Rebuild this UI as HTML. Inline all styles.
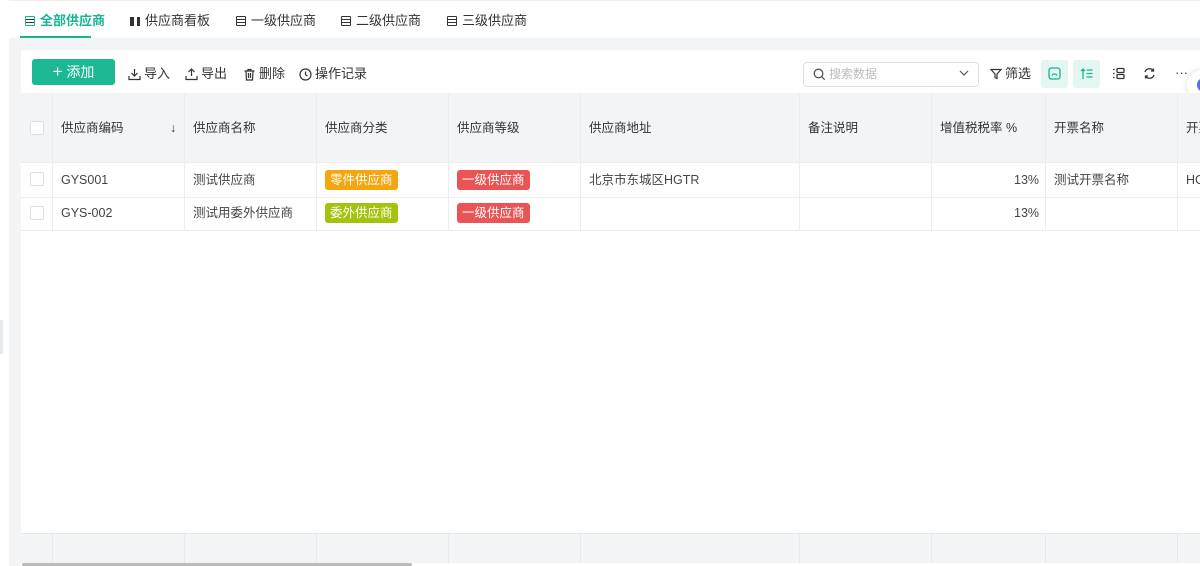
<!DOCTYPE html>
<html><head><meta charset="utf-8"><style>
*{box-sizing:border-box;margin:0;padding:0}
body{width:1200px;height:566px;overflow:hidden;background:#fff;font-family:"Liberation Sans","Noto Sans CJK SC",sans-serif;font-size:13px;color:#333;position:relative}
.abs{position:absolute}
.gray{background:#f3f4f6}
.tab{position:absolute;top:12px;height:18px;line-height:18px;font-size:13px;color:#333;display:flex;align-items:center;gap:5px;white-space:nowrap}
.ti{width:10px;height:10px;border:1.5px solid #333;border-radius:1px;position:relative}
.ti:after{content:"";position:absolute;left:0;right:0;top:2px;height:2px;border-top:1px solid #333;border-bottom:1px solid #333}
.tb{position:absolute;top:65px;height:18px;line-height:18px;font-size:13px;color:#333;display:flex;align-items:center;gap:3px;white-space:nowrap}
.col{position:absolute;top:93px;height:137px;border-left:1px solid #ebedf0}
.fcol{position:absolute;top:533px;height:30px;border-left:1px solid #e6e8eb}
.h{position:absolute;top:119px;height:18px;line-height:18px;font-size:12.5px;color:#333;white-space:nowrap}
.c{position:absolute;height:18px;line-height:18px;font-size:12.5px;color:#444;white-space:nowrap}
.tag{position:absolute;color:#fff;font-size:12.5px;padding:0 5px;height:20px;line-height:20px;border-radius:3px;white-space:nowrap}
.cb{position:absolute;left:30px;width:14px;height:14px;border:1px solid #dcdfe6;border-radius:2px;background:#fff}
</style></head><body>
<div class="abs gray" style="left:9px;top:38px;width:1191px;height:528px"></div>
<div class="abs" style="left:9px;top:0;width:1191px;height:38px;background:#fff;border-top:1px solid #eee"></div>
<div class="abs" style="left:0;top:320px;width:3px;height:34px;background:#e9eaec"></div>
<div class="tab" style="left:25px;color:#19b394;font-weight:bold"><span class="ti" style="border-color:#19b394"></span>全部供应商</div>
<div class="abs" style="left:20px;top:36px;width:71px;height:2px;background:#19b394"></div>
<div class="tab" style="left:130px"><span style="display:inline-block;width:10px;height:9px;border-left:4px solid #333;border-right:3px solid #333"></span>供应商看板</div>
<div class="tab" style="left:236px"><span class="ti"></span>一级供应商</div>
<div class="tab" style="left:341px"><span class="ti"></span>二级供应商</div>
<div class="tab" style="left:447px"><span class="ti"></span>三级供应商</div>

<div class="abs" style="left:21px;top:50px;width:1179px;height:516px;background:#fff"></div>
<div class="abs" style="left:32px;top:59px;width:83px;height:26px;background:#1cb894;border-radius:3px;color:#fff;font-size:14px;text-align:center;line-height:26px"><b style="font-size:17px;font-weight:normal">+</b> 添加</div>
<div class="tb" style="left:128px"><svg width="13" height="13" viewBox="0 0 13 13" fill="none" stroke="#333" stroke-width="1.2"><path d="M6.5 1v7M3.5 5l3 3 3-3M1 8v3.5h11V8"/></svg>导入</div>
<div class="tb" style="left:185px"><svg width="13" height="13" viewBox="0 0 13 13" fill="none" stroke="#333" stroke-width="1.2"><path d="M6.5 8V1M3.5 4l3-3 3 3M1 8v3.5h11V8"/></svg>导出</div>
<div class="tb" style="left:243px"><svg width="13" height="13" viewBox="0 0 13 13" fill="none" stroke="#333" stroke-width="1.2"><path d="M1.5 3h10M5 3V1.5h3V3M3 3l.5 9h6l.5-9M5.5 5v5M7.5 5v5"/></svg>删除</div>
<div class="tb" style="left:299px"><svg width="13" height="13" viewBox="0 0 13 13" fill="none" stroke="#333" stroke-width="1.2"><circle cx="6.5" cy="6.5" r="5.5"/><path d="M6.5 3.5v3.2l2 1.3"/></svg>操作记录</div>

<div class="abs" style="left:803px;top:62px;width:176px;height:25px;border:1px solid #dcdfe6;border-radius:4px"></div>
<svg class="abs" style="left:813px;top:68px" width="13" height="13" viewBox="0 0 13 13" fill="none" stroke="#555" stroke-width="1.3"><circle cx="5.5" cy="5.5" r="4.3"/><path d="M8.7 8.7l3 3"/></svg>
<div class="abs" style="left:829px;top:65px;height:18px;line-height:18px;font-size:12px;color:#bbb">搜索数据</div>
<svg class="abs" style="left:959px;top:70px" width="10" height="7" viewBox="0 0 10 7" fill="none" stroke="#555" stroke-width="1.2"><path d="M1 1l4 4 4-4"/></svg>
<div class="tb" style="left:990px"><svg width="12" height="12" viewBox="0 0 12 12" fill="none" stroke="#333" stroke-width="1.2"><path d="M1 1.5h10L7 6v4.5L5 9.5V6z"/></svg>筛选</div>
<div class="abs" style="left:1041px;top:60px;width:27px;height:28px;background:#e3f6f1;border-radius:3px"></div>
<svg class="abs" style="left:1048px;top:67px" width="13" height="13" viewBox="0 0 13 13" fill="none" stroke="#19b394" stroke-width="1.3"><rect x="1" y="1" width="11" height="11" rx="2.5"/><path d="M4 8.5c1-2 4-2 5 0"/></svg>
<div class="abs" style="left:1073px;top:60px;width:27px;height:28px;background:#e3f6f1;border-radius:3px"></div>
<svg class="abs" style="left:1080px;top:67px" width="13" height="13" viewBox="0 0 13 13" fill="none" stroke="#19b394" stroke-width="1.3"><path d="M3 12V2M1 4l2-2 2 2M6.5 3h6M6.5 6.5h6M6.5 10h6"/></svg>
<svg class="abs" style="left:1112px;top:67px" width="13" height="13" viewBox="0 0 13 13" fill="none" stroke="#333" stroke-width="1.3"><path d="M1 2.5h1.5M1 6.5h1.5M1 10.5h1.5"/><rect x="5" y="1.5" width="7" height="4" rx="1"/><rect x="5" y="7.5" width="7" height="4" rx="1"/></svg>
<svg class="abs" style="left:1143px;top:67px" width="13" height="13" viewBox="0 0 13 13" fill="none" stroke="#333" stroke-width="1.3"><path d="M2 5a4.7 4.7 0 0 1 8.5-1M11 8a4.7 4.7 0 0 1-8.5 1M10.5 1.5V4H8M2.5 11.5V9H5"/></svg>
<div class="abs" style="left:1175px;top:64px;height:18px;line-height:18px;font-size:13px;color:#333">···</div>
<div class="abs" style="left:1187px;top:70px;width:30px;height:30px;border-radius:50%;background:#fff;box-shadow:0 0 6px rgba(0,0,0,.15)"></div>
<div class="abs" style="left:1197px;top:78px;width:14px;height:14px;border-radius:50%;background:#5b6cf0"></div>

<div class="abs gray" style="left:21px;top:93px;width:1179px;height:70px;border-bottom:1px solid #ebedf0"></div>
<div class="abs" style="left:21px;top:197px;width:1179px;height:1px;background:#ebedf0"></div>
<div class="abs" style="left:21px;top:230px;width:1179px;height:1px;background:#ebedf0"></div>
<div class="col" style="left:52px"></div><div class="col" style="left:184px"></div><div class="col" style="left:316px"></div><div class="col" style="left:448px"></div><div class="col" style="left:580px"></div><div class="col" style="left:799px"></div><div class="col" style="left:931px"></div><div class="col" style="left:1045px"></div><div class="col" style="left:1177px"></div>
<div class="cb" style="top:121px;left:30px"></div>
<div class="h" style="left:61px">供应商编码</div><div class="h" style="left:170px">↓</div>
<div class="h" style="left:193px">供应商名称</div>
<div class="h" style="left:325px">供应商分类</div>
<div class="h" style="left:457px">供应商等级</div>
<div class="h" style="left:589px">供应商地址</div>
<div class="h" style="left:808px">备注说明</div>
<div class="h" style="left:940px">增值税税率 %</div>
<div class="h" style="left:1054px">开票名称</div>
<div class="h" style="left:1186px">开票</div>

<div class="cb" style="top:172px"></div>
<div class="c" style="left:61px;top:171px">GYS001</div>
<div class="c" style="left:193px;top:171px">测试供应商</div>
<div class="tag" style="left:325px;top:170px;background:#f5a50f">零件供应商</div>
<div class="tag" style="left:457px;top:170px;background:#eb5454">一级供应商</div>
<div class="c" style="left:589px;top:171px">北京市东城区HGTR</div>
<div class="c" style="left:1014px;top:171px">13%</div>
<div class="c" style="left:1054px;top:171px">测试开票名称</div>
<div class="c" style="left:1186px;top:171px">HG</div>

<div class="cb" style="top:206px"></div>
<div class="c" style="left:61px;top:204px">GYS-002</div>
<div class="c" style="left:193px;top:204px">测试用委外供应商</div>
<div class="tag" style="left:325px;top:203px;background:#a3c40e">委外供应商</div>
<div class="tag" style="left:457px;top:203px;background:#eb5454">一级供应商</div>
<div class="c" style="left:1014px;top:204px">13%</div>

<div class="abs gray" style="left:21px;top:533px;width:1179px;height:30px;border-top:1px solid #e6e8eb"></div>
<div class="fcol" style="left:52px"></div><div class="fcol" style="left:184px"></div><div class="fcol" style="left:316px"></div><div class="fcol" style="left:448px"></div><div class="fcol" style="left:580px"></div><div class="fcol" style="left:799px"></div><div class="fcol" style="left:931px"></div><div class="fcol" style="left:1045px"></div><div class="fcol" style="left:1177px"></div>
<div class="abs" style="left:22px;top:563px;width:390px;height:3px;background:#bbb;border-radius:2px"></div>
</body></html>
